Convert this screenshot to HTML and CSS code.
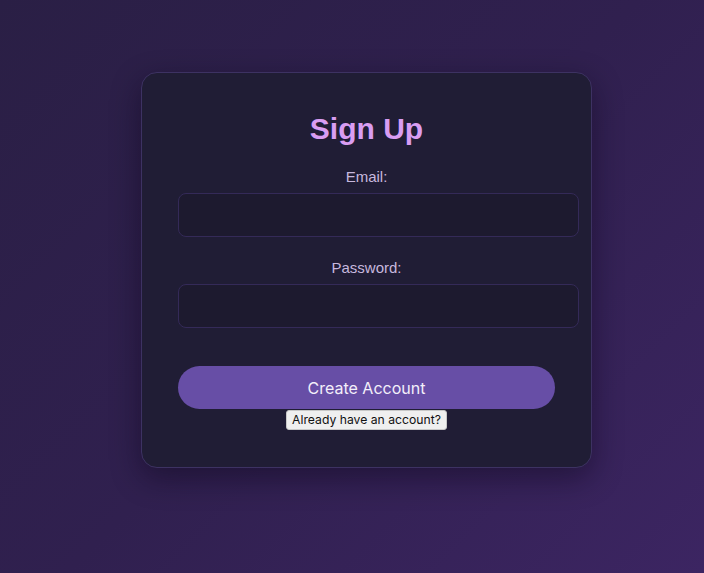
FILE: index.html
```html
<!DOCTYPE html>
<html lang="en">
<head>
<meta charset="utf-8">
<title>Sign Up</title>
<link rel="stylesheet" href="styles.css">
</head>
<body>
<main class="page">
  <form class="card">
    <h2 class="title">Sign Up</h2>
    <label class="label" for="email">Email:</label>
    <input class="field" id="email" type="email">
    <label class="label label-gap" for="password">Password:</label>
    <input class="field" id="password" type="password">
    <button class="primary" type="button">Create Account</button>
    <button class="link" type="button">Already have an account?</button>
  </form>
</main>
</body>
</html>
```
FILE: styles.css
```css
html, body {
  margin: 0;
  height: 100%;
}
body {
  background: linear-gradient(135deg, #2a1f45 0%, #30204f 50%, #3c2562 100%);
  font-family: "Liberation Sans", Arial, sans-serif;
}
.page {
  display: flex;
  justify-content: center;
  align-items: flex-start;
  padding: 72px 0 0 29px;
  box-sizing: border-box;
  min-height: 100%;
}
.card {
  width: 377px;
  padding: 36px 36px 37px;
  background: #201d35;
  border: 1px solid #3d3262;
  border-radius: 16px;
  box-shadow: 0 10px 30px rgba(10, 5, 25, 0.45);
  display: flex;
  flex-direction: column;
  align-items: stretch;
}
.title {
  margin: 3px 0 22px;
  text-align: center;
  font-size: 30px;
  font-weight: bold;
  color: #d99df2;
  line-height: 34px;
}
.label {
  display: block;
  text-align: center;
  font-size: 15px;
  line-height: 17px;
  color: #c7b8de;
  margin-bottom: 8px;
}
.label-gap {
  margin-top: 22px;
}
.field {
  width: 100%;
  box-sizing: content-box;
  height: 42px;
  padding: 0 11px;
  margin: 0;
  background: #1d1a2f;
  border: 1px solid #342a58;
  border-radius: 8px;
  color: #fff;
  outline: none;
}
.primary {
  margin-top: 38px;
  height: 43px;
  width: 100%;
  border: none;
  border-radius: 22px;
  background: #674ea6;
  color: #f3effa;
  font-family: Inter, "Liberation Sans", sans-serif;
  font-size: 16px;
}
.link {
  align-self: center;
  margin-top: 1px;
  height: 20px;
  padding: 0 5px;
  background: #efefef;
  color: #111;
  border: 1px solid #c8c8c8;
  border-radius: 3px;
  font-family: Inter, "Liberation Sans", sans-serif;
  font-size: 12.2px;
  line-height: 18px;
}
```
